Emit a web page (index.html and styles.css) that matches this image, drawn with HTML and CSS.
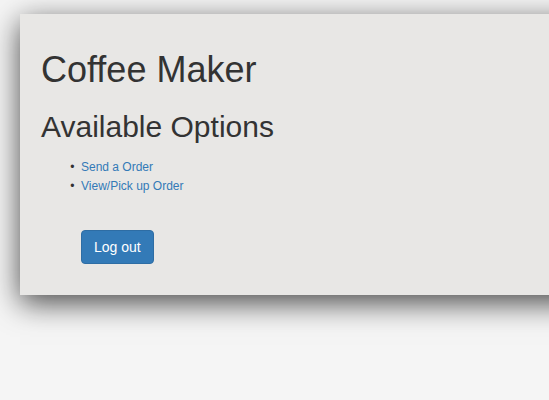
FILE: index.html
```html
<!DOCTYPE html>
<html>
<head>
<meta charset="utf-8">
<link rel="stylesheet" href="styles.css">
</head>
<body>
<div class="card">
  <h1>Coffee Maker</h1>
  <h2>Available Options</h2>
  <ul class="options">
    <li><a href="#">Send a Order</a></li>
    <li><a href="#">View/Pick up Order</a></li>
  </ul>
  <button class="btn">Log out</button>
</div>
</body>
</html>
```
FILE: styles.css
```css
html { overflow: hidden; }
body {
  margin: 0;
  background: #f5f5f5;
  font-family: "Liberation Sans", Arial, sans-serif;
  color: #333;
  height: 400px;
}
.card {
  margin: 14px -50px 0 20px;
  padding: 16px 20px 31px 21px;
  background: #e8e7e5;
  box-shadow: 0 8px 28px rgba(0,0,0,0.7);
}
h1 {
  font-size: 36px;
  font-weight: 400;
  line-height: 1.1;
  margin: 20px 0 10px;
}
h2 {
  font-size: 30px;
  font-weight: 400;
  line-height: 1.1;
  margin: 20px 0 15px;
}
.options {
  margin: 0 0 34px;
  padding-left: 40px;
  font-size: 12px;
  line-height: 19px;
}
.options li::marker {
  content: "\2022\00A0\00A0";
  color: #333;
}
.options a {
  color: #337ab7;
  text-decoration: none;
}
.btn {
  display: block;
  margin-left: 40px;
  font-family: "Liberation Sans", Arial, sans-serif;
  font-size: 14px;
  line-height: 20px;
  padding: 6px 12px;
  color: #fff;
  background: #337ab7;
  border: 1px solid #2e6da4;
  border-radius: 4px;
}
```
